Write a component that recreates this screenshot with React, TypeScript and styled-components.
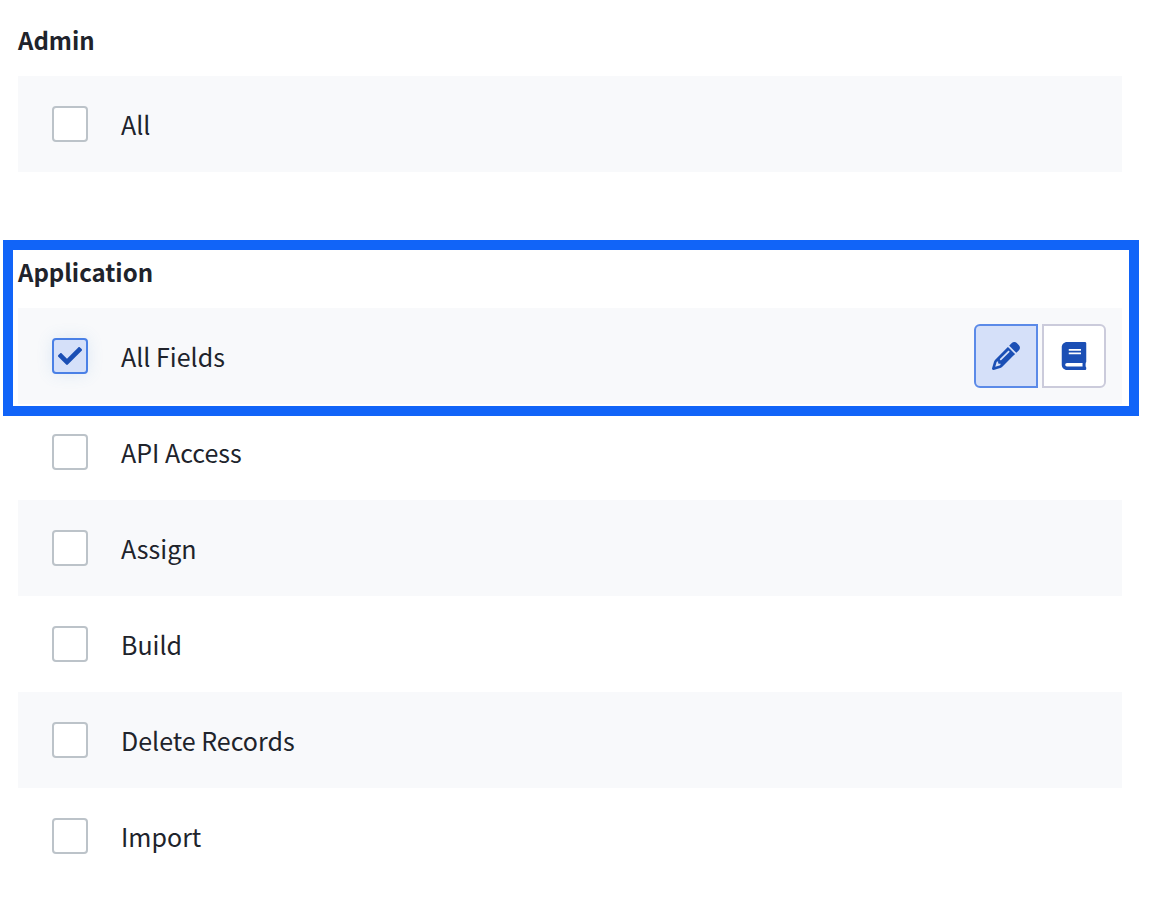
import { useId, useState } from "react";
import styled, { createGlobalStyle, css } from "styled-components";
import { FaBook, FaCheck } from "react-icons/fa";
import { FaPencil } from "react-icons/fa6";

const GlobalStyle = createGlobalStyle`
  *, *::before, *::after { box-sizing: border-box; }
  body {
    margin: 0;
    background: #ffffff;
    color: #20232b;
    font-family: "Noto Sans CJK SC", "Noto Sans", sans-serif;
    font-size: 25px;
    line-height: 36px;
  }
`;

const Page = styled.main`
  display: flex;
  flex-direction: column;
  gap: 68px;
  padding: 8px 36px 30px 18px;
`;

const Group = styled.section``;

const GroupTitle = styled.h2`
  margin: 0;
  padding: 14px 0 18px;
  font-size: 24px;
  font-weight: 700;
  line-height: 36px;
`;

const Highlighted = styled.div`
  position: relative;
`;

const HighlightFrame = styled.div`
  position: absolute;
  inset: 0 -17px -12px -15px;
  border: 10px solid #1164f8;
  pointer-events: none;
`;

const Row = styled.div<{ $striped?: boolean }>`
  display: flex;
  align-items: center;
  justify-content: space-between;
  height: 96px;
  padding: 0 16px 0 34px;
  background: ${(p) => (p.$striped ? "#f8f9fb" : "#ffffff")};
`;

const Option = styled.div`
  display: flex;
  align-items: center;
  gap: 33px;
`;

const CheckWrap = styled.span`
  display: grid;
  place-items: center;
  width: 36px;
  height: 36px;

  & > * {
    grid-area: 1 / 1;
  }

  & > svg {
    position: relative;
    width: 24px;
    height: 24px;
    color: #1b4fb5;
    pointer-events: none;
  }
`;

const CheckInput = styled.input`
  appearance: none;
  width: 36px;
  height: 36px;
  margin: 0;
  border: 2px solid #bcc3c9;
  border-radius: 4px;
  background: #ffffff;

  &:checked {
    border-color: #4a80e6;
    background: #d5e0f9;
    box-shadow: 0 0 16px rgba(90, 150, 210, 0.16);
  }
`;

const OptionLabel = styled.label`
  white-space: nowrap;
`;

const Modes = styled.div`
  display: flex;
  gap: 4px;
`;

const ModeButton = styled.button<{ $side: "left" | "right" }>`
  display: grid;
  place-items: center;
  width: 64px;
  height: 64px;
  padding: 0;
  border: 2px solid #cbcbdb;
  border-radius: ${(p) => (p.$side === "left" ? "6px 0 0 6px" : "0 6px 6px 0")};
  background: #ffffff;
  color: #1b4fb5;

  ${(p) =>
    p["aria-pressed"] &&
    css`
      border-color: #5b8ae8;
      background: #d5e0f9;
    `}

  & > svg {
    width: 28px;
    height: 28px;
  }
`;

type PermissionProps = {
  label: string;
  striped?: boolean;
  initial?: boolean;
};

function Permission({ label, striped, initial = false }: PermissionProps) {
  const id = useId();
  const [checked, setChecked] = useState(initial);
  const [mode, setMode] = useState<"edit" | "read">("edit");

  return (
    <Row $striped={striped}>
      <Option>
        <CheckWrap>
          <CheckInput
            id={id}
            type="checkbox"
            checked={checked}
            onChange={(e) => setChecked(e.target.checked)}
          />
          {checked && <FaCheck aria-hidden="true" />}
        </CheckWrap>
        <OptionLabel htmlFor={id}>{label}</OptionLabel>
      </Option>
      {checked && (
        <Modes>
          <ModeButton
            type="button"
            $side="left"
            aria-label="Edit"
            aria-pressed={mode === "edit"}
            onClick={() => setMode("edit")}
          >
            <FaPencil />
          </ModeButton>
          <ModeButton
            type="button"
            $side="right"
            aria-label="Read"
            aria-pressed={mode === "read"}
            onClick={() => setMode("read")}
          >
            <FaBook />
          </ModeButton>
        </Modes>
      )}
    </Row>
  );
}

const applicationPermissions = ["API Access", "Assign", "Build", "Delete Records", "Import"];

export default function App() {
  return (
    <>
      <GlobalStyle />
      <Page>
        <Group>
          <GroupTitle>Admin</GroupTitle>
          <Permission label="All" striped />
        </Group>
        <Group>
          <Highlighted>
            <GroupTitle>Application</GroupTitle>
            <Permission label="All Fields" striped initial />
            <HighlightFrame />
          </Highlighted>
          {applicationPermissions.map((label, i) => (
            <Permission key={label} label={label} striped={i % 2 === 1} />
          ))}
        </Group>
      </Page>
    </>
  );
}
